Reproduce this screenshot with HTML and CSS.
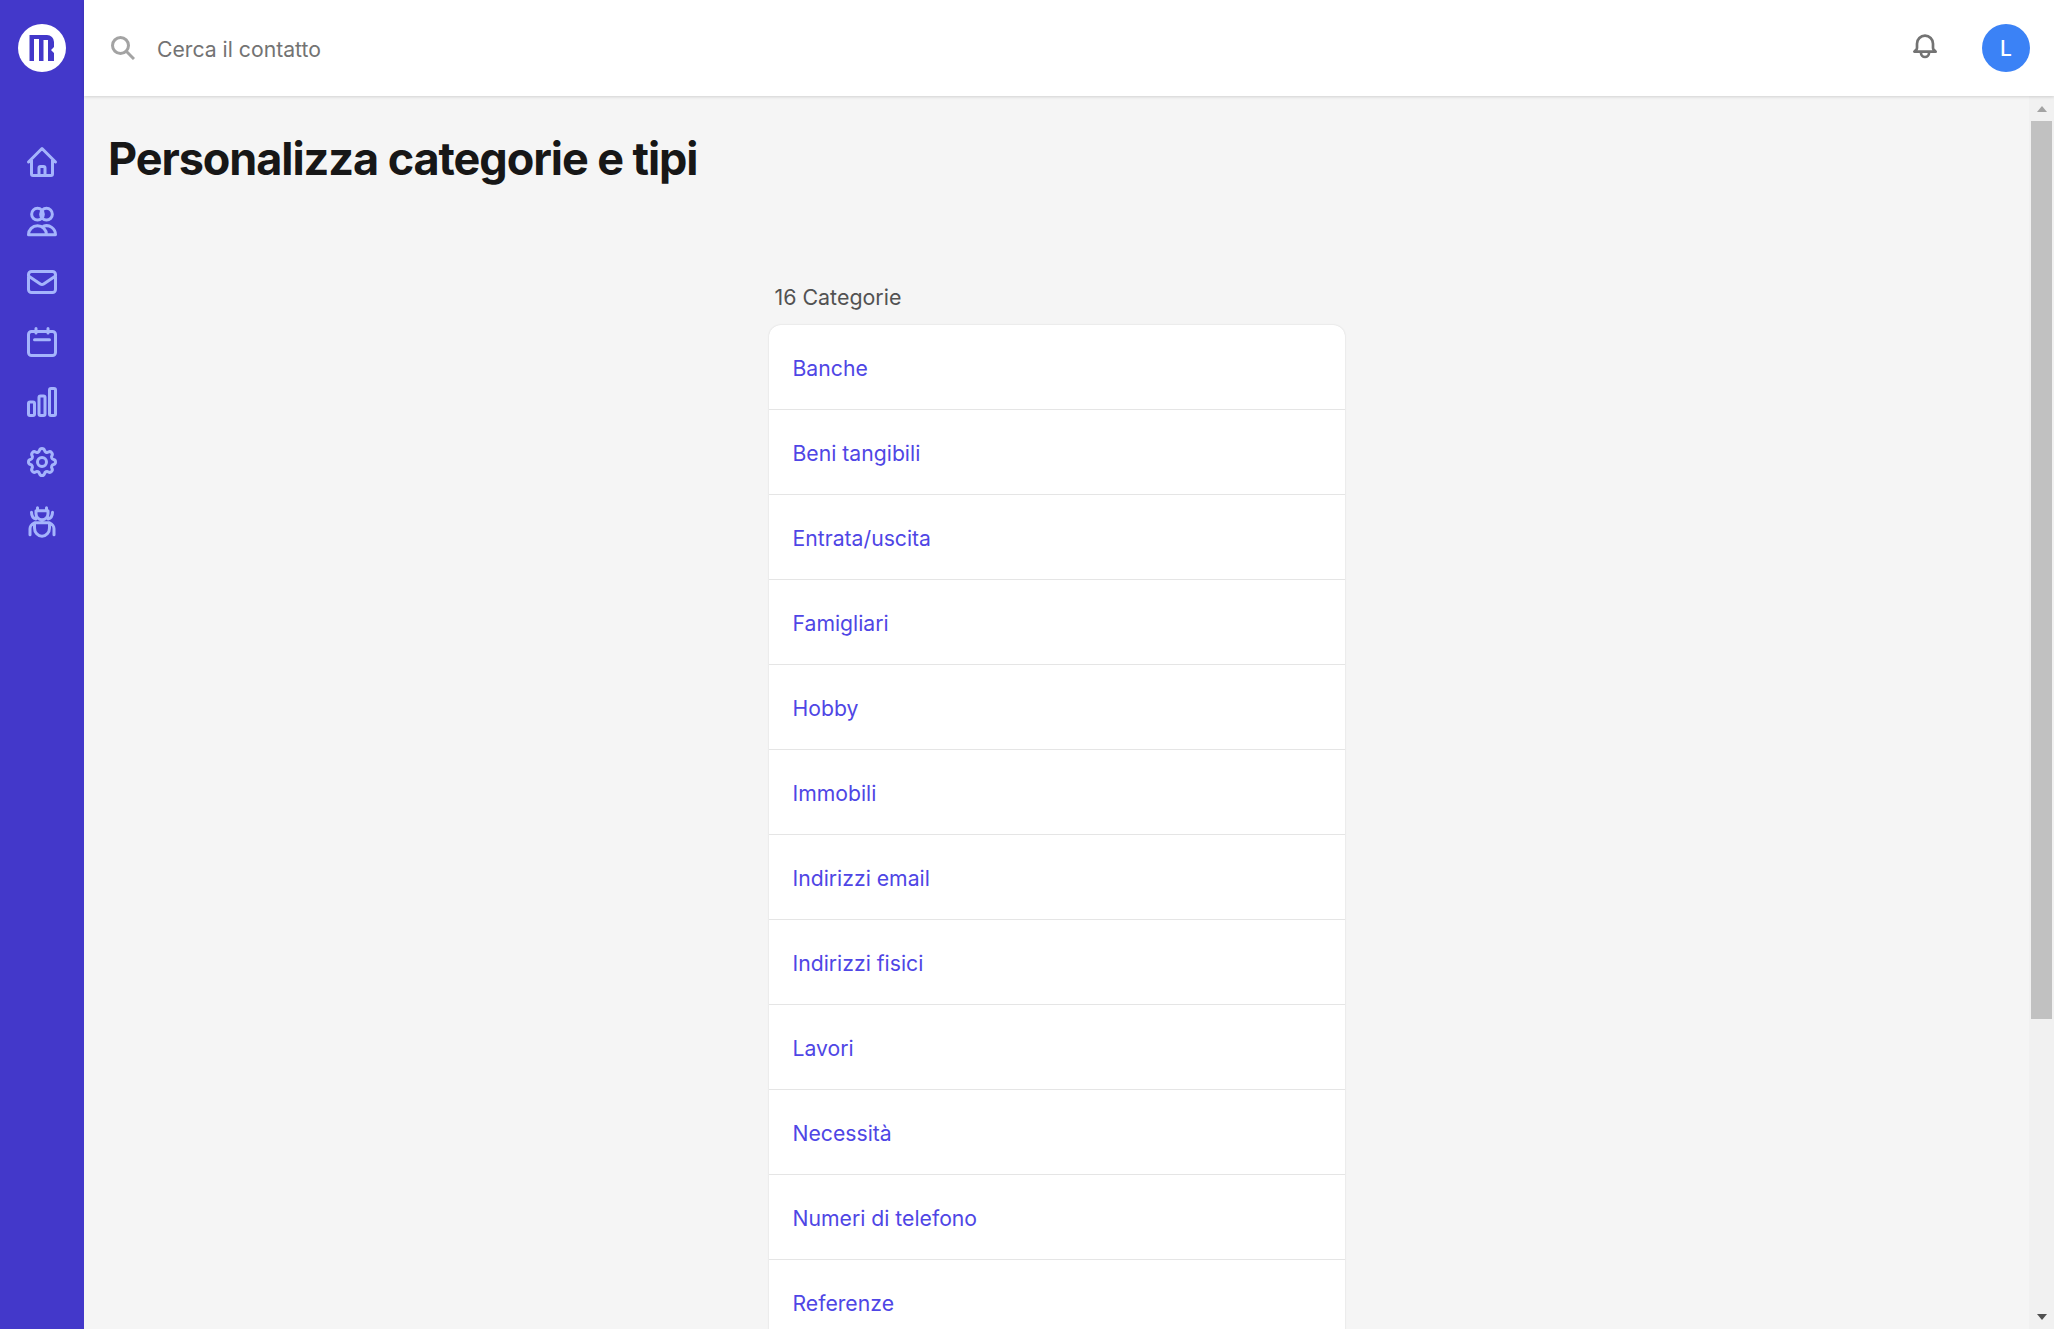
FILE: index.html
```html
<!DOCTYPE html>
<html lang="it">
<head>
<meta charset="utf-8">
<title>Personalizza categorie e tipi</title>
<link rel="stylesheet" href="styles.css">
</head>
<body>
<div class="app">
  <nav class="sidebar">
    <a class="logo" href="#">
      <svg viewBox="0 0 48 48" width="48" height="48"><circle cx="24" cy="24" r="24" fill="#fff"/><path d="M11.500 37V11H29a7 7 0 0 1 7 7v5l-3 3 3 3v8h-6V16h-4.500v21H21V15h-5v22z" fill="#4338ca"/></svg>
    </a>
    <div class="nav-icons">
      <a href="#" class="nav-icon"><svg viewBox="0 0 24 24"><path d="M3 12l2-2m0 0l7-7 7 7M5 10v10a1 1 0 0 0 1 1h3m10-11l2 2m-2-2v10a1 1 0 0 1-1 1h-3m-6 0a1 1 0 0 0 1-1v-4a1 1 0 0 1 1-1h2a1 1 0 0 1 1 1v4a1 1 0 0 0 1 1m-6 0h6"/></svg></a>
      <a href="#" class="nav-icon"><svg viewBox="0 0 24 24"><circle cx="9" cy="6.800" r="3.900"/><circle cx="15" cy="6.800" r="3.900"/><path d="M3 20.500a6 6 0 0 1 12 0zM13 14.800a6 6 0 0 1 8 5.700h-6"/></svg></a>
      <a href="#" class="nav-icon"><svg viewBox="0 0 24 24"><path d="M3 8l7.890 5.260a2 2 0 0 0 2.220 0L21 8M5 19h14a2 2 0 0 0 2-2V7a2 2 0 0 0-2-2H5a2 2 0 0 0-2 2v10a2 2 0 0 0 2 2z"/></svg></a>
      <a href="#" class="nav-icon"><svg viewBox="0 0 24 24"><rect x="3" y="5" width="18" height="16" rx="2"/><path d="M8 3v3M16 3v3M7 10.500h10"/></svg></a>
      <a href="#" class="nav-icon"><svg viewBox="0 0 24 24"><rect x="3" y="12" width="4" height="9" rx="1"/><rect x="10" y="8" width="4" height="13" rx="1"/><rect x="17" y="3" width="4" height="18" rx="1"/></svg></a>
      <a href="#" class="nav-icon"><svg viewBox="0 0 24 24"><path d="M10.325 4.317c.426-1.756 2.924-1.756 3.350 0a1.724 1.724 0 0 0 2.573 1.066c1.543-.940 3.310.826 2.370 2.370a1.724 1.724 0 0 0 1.065 2.572c1.756.426 1.756 2.924 0 3.350a1.724 1.724 0 0 0-1.066 2.573c.940 1.543-.826 3.310-2.370 2.370a1.724 1.724 0 0 0-2.572 1.065c-.426 1.756-2.924 1.756-3.350 0a1.724 1.724 0 0 0-2.573-1.066c-1.543.940-3.310-.826-2.370-2.370a1.724 1.724 0 0 0-1.065-2.572c-1.756-.426-1.756-2.924 0-3.350a1.724 1.724 0 0 0 1.066-2.573c-.940-1.543.826-3.310 2.370-2.370.996.608 2.296.070 2.572-1.065z"/><circle cx="12" cy="12" r="3"/></svg></a>
      <a href="#" class="nav-icon"><svg viewBox="0 0 24 24"><path d="M9 2.500v2M15 2.500v2M8 4.500h8v2a4 4 0 0 1-8 0zM7 12.500h10v3.500a5 5.500 0 0 1-10 0zM12 10.500v2M5 5.500c0 2.500 1 4 3 4.500M19 5.500c0 2.500-1 4-3 4.500M4 20.500v-4c0-1.800 1-3 3-4M20 20.500v-4c0-1.800-1-3-3-4"/></svg></a>
    </div>
  </nav>
  <div class="right">
    <header class="topbar">
      <div class="search">
        <svg class="search-icon" viewBox="0 0 24 24"><circle cx="9.500" cy="9.500" r="8"/><path d="M15.500 15.500l7.500 7.500"/></svg>
        <span class="search-text">Cerca il contatto</span>
      </div>
      <div class="top-actions">
        <svg class="bell" viewBox="0 0 24 24"><path d="M15 17h5l-1.400-1.400A2 2 0 0 1 18 14.200V11a6 6 0 0 0-12 0v3.200c0 .5-.2 1-.6 1.400L4 17h11zM15 17v1a3 3 0 0 1-6 0v-1"/></svg>
        <span class="avatar">L</span>
      </div>
    </header>
    <div class="page">
      <main class="content">
        <h1 class="title">Personalizza categorie e tipi</h1>
        <section class="panel">
          <p class="count">16 Categorie</p>
          <ul class="list">
            <li><a href="#">Banche</a></li>
            <li><a href="#">Beni tangibili</a></li>
            <li><a href="#">Entrata/uscita</a></li>
            <li><a href="#">Famigliari</a></li>
            <li><a href="#">Hobby</a></li>
            <li><a href="#">Immobili</a></li>
            <li><a href="#">Indirizzi email</a></li>
            <li><a href="#">Indirizzi fisici</a></li>
            <li><a href="#">Lavori</a></li>
            <li><a href="#">Necessità</a></li>
            <li><a href="#">Numeri di telefono</a></li>
            <li><a href="#">Referenze</a></li>
            <li><a href="#">Salute</a></li>
            <li><a href="#">Social</a></li>
            <li><a href="#">Sport</a></li>
            <li><a href="#">Viaggi</a></li>
          </ul>
        </section>
      </main>
      <div class="scrollbar" aria-hidden="true">
        <div class="sb-btn"><span class="arrow-up"></span></div>
        <div class="sb-track"><div class="sb-thumb"></div></div>
        <div class="sb-btn"><span class="arrow-down"></span></div>
      </div>
    </div>
  </div>
</div>
</body>
</html>
```
FILE: styles.css
```css
* { box-sizing: border-box; }
html, body { margin: 0; height: 100%; overflow: hidden; }
body { font-family: Inter, "Liberation Sans", sans-serif; color: #171717; background: #f5f5f5; }
a { text-decoration: none; color: inherit; }
.app { display: flex; height: 100vh; }
.sidebar { width: 84px; flex: none; background: #4338ca; display: flex; flex-direction: column; align-items: center; padding-top: 24px; }
.logo { display: block; width: 48px; height: 48px; }
.logo svg { display: block; }
.nav-icons { display: flex; flex-direction: column; gap: 24px; margin-top: 72px; }
.nav-icon { display: block; width: 36px; height: 36px; }
.nav-icon svg { display: block; width: 36px; height: 36px; fill: none; stroke: #a5b4fc; stroke-width: 2; stroke-linecap: round; stroke-linejoin: round; }
.right { flex: 1; min-width: 0; display: flex; flex-direction: column; }
.topbar { height: 96px; flex: none; background: #fff; display: flex; align-items: center; justify-content: space-between; padding: 0 24px 0 27px; box-shadow: 0 1px 3px rgba(0,0,0,.15); position: relative; z-index: 1; }
.search { display: flex; align-items: center; gap: 22px; }
.search-icon { width: 24px; height: 24px; fill: none; stroke: #a3a3a3; stroke-width: 3; }
.search-text { font-size: 21.200px; color: #737373; padding-top: 1px; }
.top-actions { display: flex; align-items: center; gap: 41px; }
.bell { width: 32px; height: 32px; margin-top: -7px; fill: none; stroke: #737373; stroke-width: 2; stroke-linecap: round; stroke-linejoin: round; }
.avatar { width: 48px; height: 48px; border-radius: 50%; background: #3b82f6; color: #fff; display: flex; align-items: center; justify-content: center; font-size: 21px; font-weight: 500; }
.page { flex: 1; min-height: 0; display: flex; }
.content { flex: 1; min-width: 0; overflow: hidden; padding: 33px 24px 36px 24px; }
.title { font-size: 45px; line-height: 60px; font-weight: 700; letter-spacing: -1.070px; margin: 0 0 94px; }
.panel { width: 576px; margin: 0 auto; }
.count { margin: 0 0 13px 6px; font-size: 21.400px; line-height: 29px; color: #525252; }
.list { list-style: none; margin: 0; padding: 0; background: #fff; border-radius: 12px; box-shadow: 0 0 2px rgba(0,0,0,.14); overflow: hidden; }
.list li { height: 85px; padding: 1px 24px 0; display: flex; align-items: center; font-size: 21.200px; color: #4f46e5; border-bottom: 1px solid #e5e5e5; }
.list li:last-child { border-bottom: 0; }
.scrollbar { width: 25px; flex: none; background: #f1f1f1; display: flex; flex-direction: column; padding: 0 2px; }
.sb-btn { height: 25px; flex: none; display: flex; align-items: center; justify-content: center; }
.sb-track { flex: 1; min-height: 0; }
.sb-thumb { height: 898px; background: #c1c1c1; }
.arrow-up, .arrow-down { width: 0; height: 0; border-left: 5.500px solid transparent; border-right: 5.500px solid transparent; }
.arrow-up { border-bottom: 6px solid #a3a3a3; }
.arrow-down { border-top: 6px solid #505050; }
```
